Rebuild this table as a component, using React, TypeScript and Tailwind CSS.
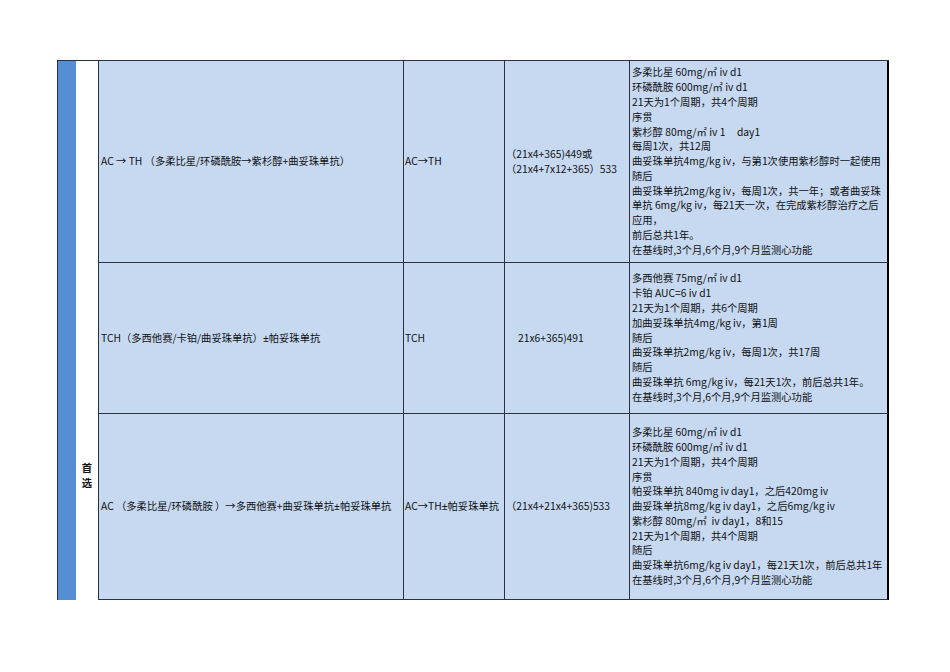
import React from "react";

const r1 = [
  "多柔比星 60mg/㎡ iv d1",
  "环磷酰胺 600mg/㎡ iv d1",
  "21天为1个周期，共4个周期",
  "序贯",
  "紫杉醇 80mg/㎡ iv 1     day1",
  "每周1次，共12周",
  "曲妥珠单抗4mg/kg iv，与第1次使用紫杉醇时一起使用",
  "随后",
  "曲妥珠单抗2mg/kg iv，每周1次，共一年；或者曲妥珠",
  "单抗 6mg/kg iv，每21天一次，在完成紫杉醇治疗之后",
  "应用，",
  "前后总共1年。",
  "在基线时,3个月,6个月,9个月监测心功能",
];
const r2 = [
  "多西他赛 75mg/㎡ iv d1",
  "卡铂 AUC=6 iv d1",
  "21天为1个周期，共6个周期",
  "加曲妥珠单抗4mg/kg iv，第1周",
  "随后",
  "曲妥珠单抗2mg/kg iv，每周1次，共17周",
  "随后",
  "曲妥珠单抗 6mg/kg iv，每21天1次，前后总共1年。",
  "在基线时,3个月,6个月,9个月监测心功能",
];
const r3 = [
  "多柔比星 60mg/㎡ iv d1",
  "环磷酰胺 600mg/㎡ iv d1",
  "21天为1个周期，共4个周期",
  "序贯",
  "帕妥珠单抗 840mg iv day1，之后420mg iv",
  "曲妥珠单抗8mg/kg iv day1，之后6mg/kg iv",
  "紫杉醇 80mg/㎡  iv day1，8和15",
  "21天为1个周期，共4个周期",
  "随后",
  "曲妥珠单抗6mg/kg iv day1，每21天1次，前后总共1年",
  "在基线时,3个月,6个月,9个月监测心功能",
];

type Row = { h: string; c1: string; c2: string; c3: string[]; c3pad: string; c4: string[] };

const rows: Row[] = [
  {
    h: "h-[202px]",
    c1: "AC → TH （多柔比星/环磷酰胺→紫杉醇+曲妥珠单抗）",
    c2: "AC→TH",
    c3: ["（21x4+365)449或", "（21x4+7x12+365）533"],
    c3pad: "pl-[1px]",
    c4: r1,
  },
  {
    h: "h-[151px]",
    c1: "TCH（多西他赛/卡铂/曲妥珠单抗）±帕妥珠单抗",
    c2: "TCH",
    c3: ["21x6+365)491"],
    c3pad: "pl-[13px]",
    c4: r2,
  },
  {
    h: "h-[186px]",
    c1: "AC （多柔比星/环磷酰胺 ）→多西他赛+曲妥珠单抗±帕妥珠单抗",
    c2: "AC→TH±帕妥珠单抗",
    c3: ["（21x4+21x4+365)533"],
    c3pad: "pl-[1px]",
    c4: r3,
  },
];

function T({ s }: { s: string }) {
  const parts = s.split("±");
  return (
    <>
      {parts.map((p, i) => (
        <React.Fragment key={i}>
          {i > 0 && <span className="font-['Noto_Sans',sans-serif]">±</span>}
          {p}
        </React.Fragment>
      ))}
    </>
  );
}

export default function App() {
  return (
    <div className="w-[950px] h-[672px] bg-white overflow-hidden text-[10.3px] leading-[14.8px] text-[#111] font-['Noto_Sans_CJK_SC','Noto_Sans',sans-serif]">
      <div className="flex pt-[60px] pl-[57px]">
        <div className="w-[19px] bg-[#558ed5] border-l border-t border-[#2a3140]" />
        <div className="w-[22px] border-t border-[#2a3140] bg-white flex flex-col items-center pt-[399px] font-bold leading-[15px]">
          <span>首</span>
          <span>选</span>
        </div>
        <div className="border-t border-l border-[#2a3140]">
          {rows.map((r, i) => (
            <div key={i} className={`grid grid-cols-[305px_101px_125px_259px] ${r.h}`}>
              <div className="bg-[#c6d9f1] border-r border-b border-[#2a3140] flex items-center pl-[2px] whitespace-pre overflow-hidden">
                <span>
                  <T s={r.c1} />
                </span>
              </div>
              <div className="bg-[#c6d9f1] border-r border-b border-[#2a3140] flex items-center pl-[1px] whitespace-pre overflow-hidden">
                <span>
                  <T s={r.c2} />
                </span>
              </div>
              <div className={`bg-[#c6d9f1] border-r border-b border-[#2a3140] flex flex-col justify-center ${r.c3pad} whitespace-pre overflow-hidden`}>
                {r.c3.map((t, j) => (
                  <div key={j}>{t}</div>
                ))}
              </div>
              <div className="bg-[#c6d9f1] border-r-[2px] border-r-black border-b border-b-[#2a3140] flex flex-col justify-center pl-[2px] whitespace-pre overflow-hidden">
                {r.c4.map((t, j) => (
                  <div key={j}>{t}</div>
                ))}
              </div>
            </div>
          ))}
        </div>
      </div>
    </div>
  );
}
